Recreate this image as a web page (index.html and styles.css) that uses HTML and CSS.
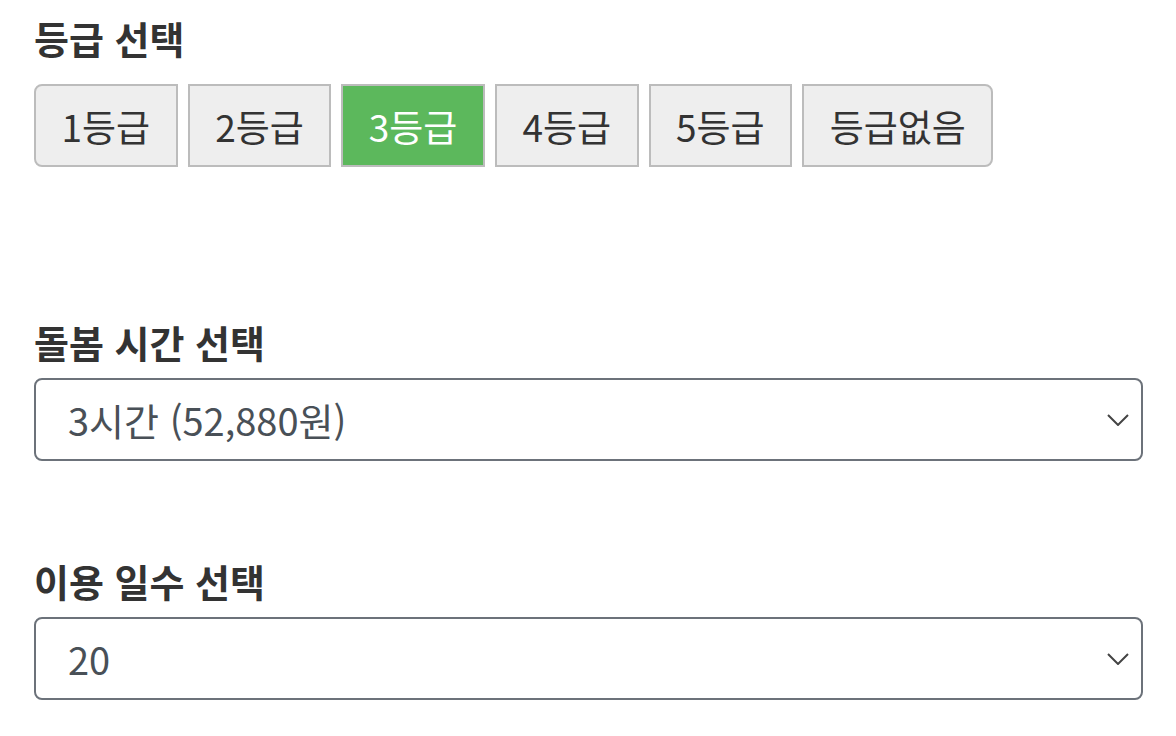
FILE: index.html
```html
<!DOCTYPE html>
<html lang="ko">
<head>
    <meta charset="UTF-8">
    <meta name="viewport" content="width=device-width, initial-scale=1.0">
    <title>돌봄 요금 계산</title>
    <link rel="stylesheet" href="styles.css">
</head>
<body>
    <main class="calc">
        <section class="field field-grade">
            <h2 class="field-title">등급 선택</h2>
            <div class="grade-group">
                <button class="grade-btn">1등급</button>
                <button class="grade-btn">2등급</button>
                <button class="grade-btn active">3등급</button>
                <button class="grade-btn">4등급</button>
                <button class="grade-btn">5등급</button>
                <button class="grade-btn">등급없음</button>
            </div>
        </section>

        <section class="field">
            <h2 class="field-title">돌봄 시간 선택</h2>
            <div class="select-wrap">
                <select class="select">
                    <option>3시간 (52,880원)</option>
                </select>
                <svg class="chevron" width="22" height="12" viewBox="0 0 22 12"><path d="M1 1l10 10L21 1" fill="none" stroke="#444" stroke-width="2"/></svg>
            </div>
        </section>

        <section class="field">
            <h2 class="field-title">이용 일수 선택</h2>
            <div class="select-wrap">
                <select class="select">
                    <option>20</option>
                </select>
                <svg class="chevron" width="22" height="12" viewBox="0 0 22 12"><path d="M1 1l10 10L21 1" fill="none" stroke="#444" stroke-width="2"/></svg>
            </div>
        </section>
    </main>
</body>
</html>
```

FILE: styles.css
```css
body {
    font-family: "Noto Sans CJK KR", "Noto Sans", sans-serif;
    background-color: #fff;
    color: #333;
    margin: 0;
    padding: 0;
}

.calc {
    padding: 14px 33px 0 34px;
}

.field {
    margin-bottom: 96px;
}

.field:last-child {
    margin-bottom: 0;
}

.field-grade {
    margin-bottom: 151px;
}

.field-title {
    font-size: 38px;
    font-weight: 700;
    line-height: 48px;
    margin: 0 0 12px;
    color: #333;
}

.grade-group {
    display: flex;
    gap: 10px;
    padding-top: 10px;
}

.grade-btn {
    font-family: inherit;
    font-size: 37px;
    color: #333;
    height: 83px;
    padding: 0 25.5px;
    background-color: #eee;
    border: 2px solid #bcbcbc;
    border-radius: 0;
    box-sizing: border-box;
}

.grade-btn:first-child {
    border-radius: 8px 0 0 8px;
}

.grade-btn:last-child {
    border-radius: 0 8px 8px 0;
}

.grade-btn.active {
    background-color: #5cb85c;
    color: #fff;
}

.select-wrap {
    position: relative;
}

.select {
    appearance: none;
    -webkit-appearance: none;
    width: 100%;
    height: 83px;
    box-sizing: border-box;
    font-family: inherit;
    font-size: 38px;
    color: #495057;
    background-color: #fff;
    border: 2px solid #6c727a;
    border-radius: 8px;
    padding: 0 60px 0 32px;
}

.chevron {
    position: absolute;
    right: 14px;
    top: 36px;
}
```
